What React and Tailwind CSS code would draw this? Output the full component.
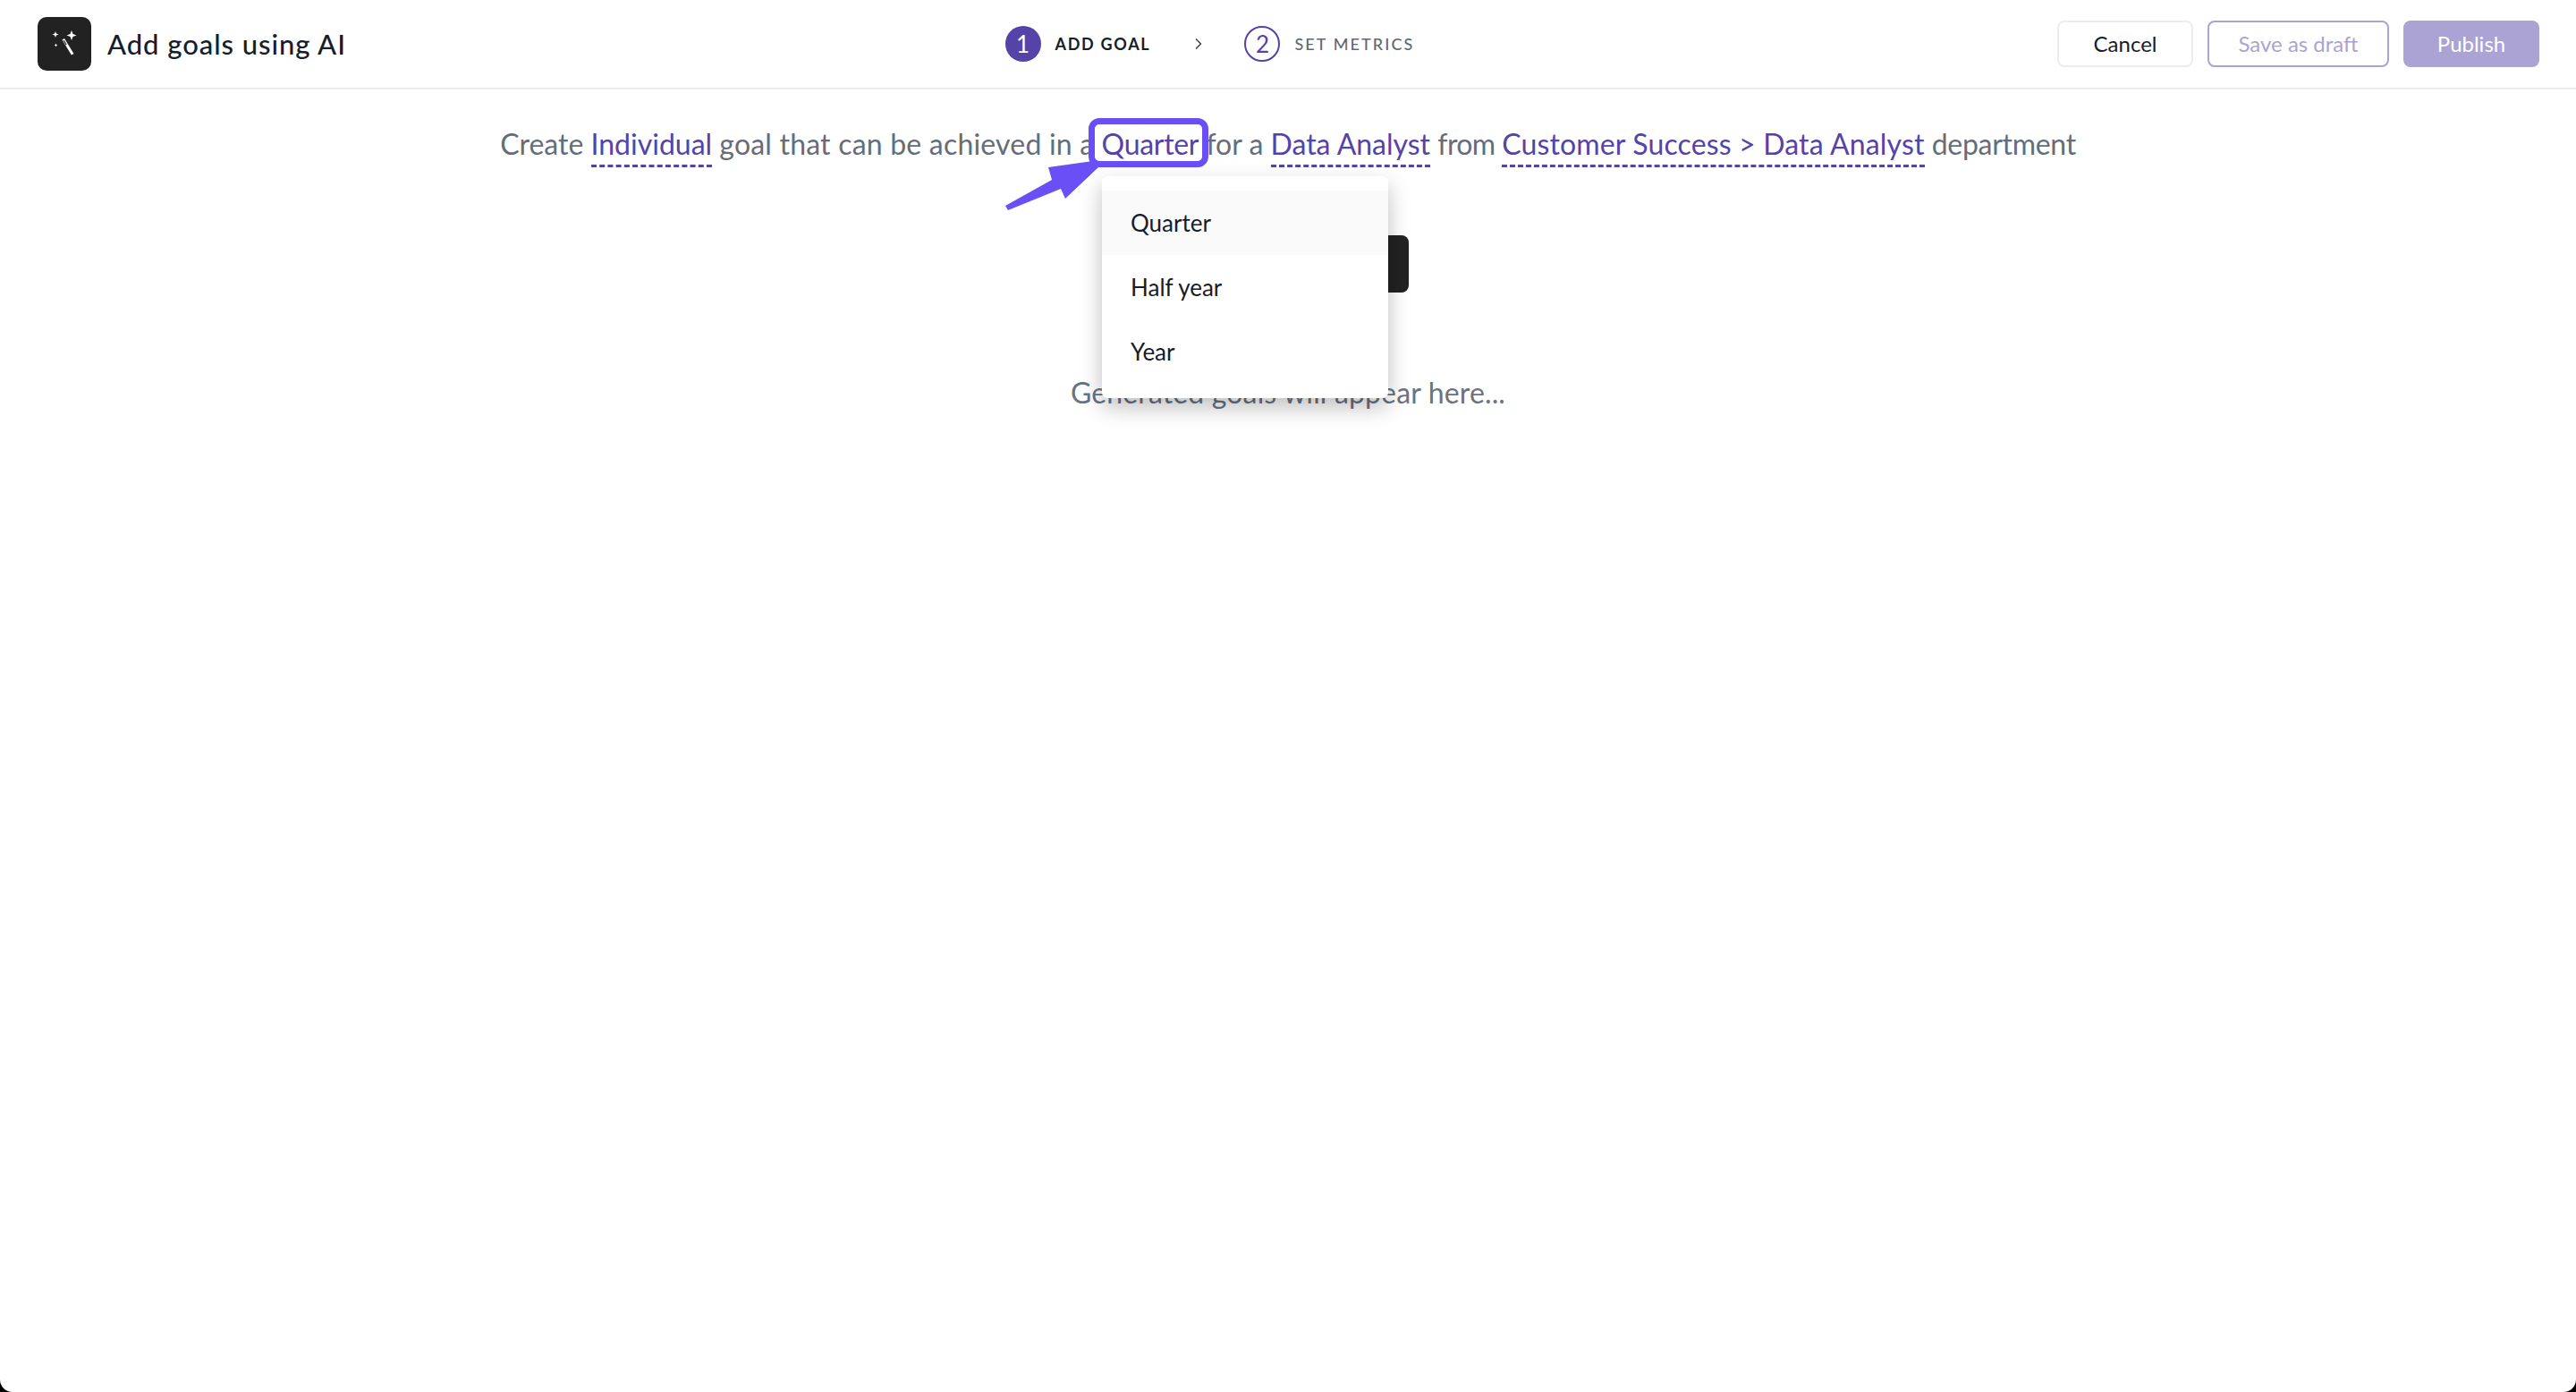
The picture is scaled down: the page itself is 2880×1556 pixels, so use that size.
import React from "react";

const font = { fontFamily: "Lato, 'Noto Sans', sans-serif" };

function Wand() {
  return (
    <svg width="60" height="60" viewBox="0 0 60 60" fill="none">
      <path d="M38 15l1.5 4 4 1.5-4 1.5-1.5 4-1.5-4-4-1.5 4-1.5z" fill="#fff" />
      <path d="M20 16l.9 2.6 2.6.9-2.6.9-.9 2.6-.9-2.6-2.6-.9 2.6-.9z" fill="#fff" />
      <path d="M20.5 29.5l.6 1.4 1.4.6-1.4.6-.6 1.4-.6-1.4-1.4-.6 1.4-.6z" fill="#fff" />
      <path d="M27.5 25.5 30 24l10.5 17-2.6 1.6z" fill="#fff" />
      <path d="M28.6 26.3 29.6 25.7 32.6 30.6 31.6 31.2z" fill="#222" />
    </svg>
  );
}

function Pick({ children, className }) {
  return (
    <span className={`text-[#5543a8] border-b-[3px] border-dashed border-[#5543a8] pb-[4px] ${className || ""}`}>
      {children}
    </span>
  );
}

export default function App() {
  return (
    <div className="min-h-screen bg-black" style={font}>
      <div className="relative h-[1556px] bg-white rounded-b-[14px] overflow-hidden">
        {/* Header */}
        <div className="h-[100px] border-b-2 border-[#ececec] pl-[42px] pr-[41px] flex items-center justify-between">
          <div className="w-[361px] flex items-center gap-[18px]">
            <div className="w-[60px] h-[60px] rounded-[10px] bg-[#222]">
              <Wand />
            </div>
            <h1 className="text-[31px] font-medium tracking-[0.95px] text-[#161d2b] whitespace-nowrap">Add goals using AI</h1>
          </div>

          <div className="w-[456px] flex items-center">
            <div className="shrink-0 w-10 h-10 rounded-full bg-[#5543a8] text-white text-[26px] flex items-center justify-center">1</div>
            <span className="ml-4 shrink-0 whitespace-nowrap text-[18px] font-bold tracking-[1.7px] text-[#161d2b]">ADD GOAL</span>
            <svg className="ml-[48px] shrink-0" width="12" height="14" viewBox="0 0 12 14" fill="none">
              <path d="M3 1.5 8.5 7 3 12.5" stroke="#333" strokeWidth="1.3" />
            </svg>
            <div className="ml-[45px] shrink-0 w-10 h-10 rounded-full border-2 border-[#5543a8] text-[#5543a8] text-[26px] flex items-center justify-center">2</div>
            <span className="ml-4 shrink-0 text-[18px] font-medium tracking-[2.1px] text-[#5f6875] whitespace-nowrap">SET METRICS</span>
          </div>

          <div className="flex items-center gap-4 text-[24px]">
            <button className="w-[152px] h-[52px] rounded-lg border-2 border-[#ededed] text-[#161d2b]">Cancel</button>
            <button className="w-[203px] h-[52px] rounded-lg border-2 border-[#aba3d3] text-[#aba3d3]">Save as draft</button>
            <button className="w-[152px] h-[52px] rounded-lg bg-[#aba3d3] text-white">Publish</button>
          </div>
        </div>

        {/* Prompt */}
        <div className="pt-[41px] flex flex-col items-center">
          <p className="text-[32px] leading-10 text-[#656d7a] whitespace-nowrap">
            Create <Pick>Individual</Pick> <span className="tracking-[0.2px]">goal that can be achieved in a</span>{" "}
            <span className="relative text-[#5543a8] tracking-[-0.3px]">
              Quarter
              <span className="absolute left-[-15px] right-[-11px] top-[-9px] h-[55px] rounded-[12px] border-[7px] border-[#6b4ff6]" />
            </span>{" "}
            for a <Pick>Data Analyst</Pick> <span className="tracking-[-0.6px]">from </span><Pick className="tracking-[0.15px]">Customer Success &gt; Data Analyst</Pick>{" "}
            <span className="tracking-[-0.3px]">department</span>
          </p>

          <button className="mt-[82px] w-[270px] h-16 rounded-lg bg-[#222] text-white text-[24px]">Generate goals</button>

          <p className="mt-[92px] text-[32px] tracking-[0.15px] leading-10 text-[#6b7280]">Generated goals will appear here...</p>
        </div>

        {/* Arrow */}
        <svg className="absolute left-0 top-0" width="1300" height="260" fill="none">
          <path d="M1124 230 1176 201 1172 187 1222 180 1228 187 1191 222 1186 211 1127 235z" fill="#6b4ff6" />
        </svg>

        {/* Dropdown */}
        <div className="absolute left-[1232px] top-[197px] w-[320px] h-[248px] py-4 rounded-md bg-white shadow-[0_10px_24px_rgba(0,0,0,0.25)] text-[26px] text-[#161d2b]">
          <div className="h-[72px] px-8 flex items-center bg-[#fafafa]">Quarter</div>
          <div className="h-[72px] px-8 flex items-center">Half year</div>
          <div className="h-[72px] px-8 flex items-center">Year</div>
        </div>
      </div>
    </div>
  );
}
